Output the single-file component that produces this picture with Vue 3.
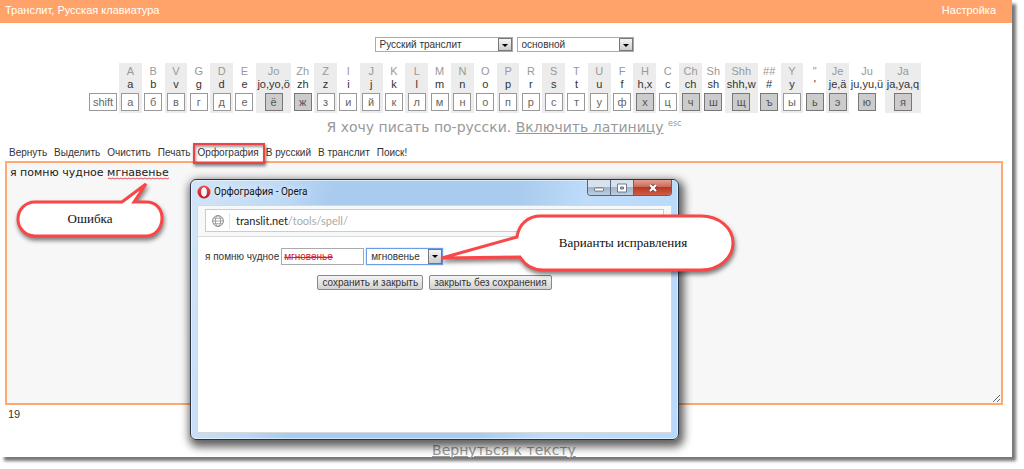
<script setup>
import { ref } from 'vue'

const letters = [
  ['A', 'a', 'а'], ['B', 'b', 'б'], ['V', 'v', 'в'], ['G', 'g', 'г'], ['D', 'd', 'д'], ['E', 'e', 'е'],
  ['Jo', 'jo,yo,ö', 'ё', 1], ['Zh', 'zh', 'ж', 1], ['Z', 'z', 'з'], ['I', 'i', 'и'], ['J', 'j', 'й'],
  ['K', 'k', 'к'], ['L', 'l', 'л'], ['M', 'm', 'м'], ['N', 'n', 'н'], ['O', 'o', 'о'], ['P', 'p', 'п'],
  ['R', 'r', 'р'], ['S', 's', 'с'], ['T', 't', 'т'], ['U', 'u', 'у'], ['F', 'f', 'ф'], ['H', 'h,x', 'х', 1],
  ['C', 'c', 'ц'], ['Ch', 'ch', 'ч', 1], ['Sh', 'sh', 'ш', 1], ['Shh', 'shh,w', 'щ', 1], ['##', '#', 'ъ', 1],
  ['Y', 'y', 'ы'], ['"', "'", 'ь', 1], ['Je', 'je,ä', 'э', 1], ['Ju', 'ju,yu,ü', 'ю', 1], ['Ja', 'ja,ya,q', 'я', 1],
].map(([upper, lower, key, dark], i) => ({ upper, lower, key, dark: !!dark, shaded: i % 2 === 0 }))

const actions = ['Вернуть', 'Выделить', 'Очистить', 'Печать', 'Орфография', 'В русский', 'В транслит', 'Поиск!']
const text = ref('я помню чудное мгнавенье')
const word = ref('мгновенье')
</script>

<template>
  <div class="frame">
  <div class="page">
    <header class="top">
      <a href="#">Транслит, Русская клавиатура</a>
      <a href="#">Настройка</a>
    </header>

    <main class="main">
      <div class="modes">
        <span class="pick pick-wide">
          <select aria-label="Язык"><option>Русский транслит</option></select>
          <i class="arrow"></i>
        </span>
        <span class="pick">
          <select aria-label="Раскладка"><option>основной</option></select>
          <i class="arrow"></i>
        </span>
      </div>

      <div class="keys">
        <div class="col shift"><button class="key wide" type="button">shift</button></div>
        <div v-for="l in letters" :key="l.key" class="col" :class="{ shaded: l.shaded }">
          <span class="upper">{{ l.upper }}</span>
          <span class="lower">{{ l.lower }}</span>
          <button class="key" :class="{ dark: l.dark }" type="button">{{ l.key }}</button>
        </div>
      </div>

      <p class="hint">Я хочу писать по-русски. <a href="#">Включить латиницу</a> <sup>esc</sup></p>

      <nav class="actions">
        <a v-for="a in actions" :key="a" href="#" :class="{ marked: a === 'Орфография' }">{{ a }}</a>
      </nav>

      <div class="editor">
        <textarea v-model="text" aria-label="Текст" spellcheck="false"></textarea>
        <svg class="squiggle" width="62" height="3" aria-hidden="true">
          <path d="M0 2l1-1 2 1 2-1 2 1 2-1 2 1 2-1 2 1 2-1 2 1 2-1 2 1 2-1 2 1 2-1 2 1 2-1 2 1 2-1 2 1 2-1 2 1 2-1 2 1 2-1 2 1 2-1 2 1 2-1 2 1 2-1" fill="none" stroke="#e8505a" />
        </svg>
      </div>
      <div class="count">19</div>
      <p class="back"><a href="#">Вернуться к тексту</a></p>
    </main>

    <section class="window" aria-label="Орфография">
      <div class="titlebar">
        <svg width="14" height="14" viewBox="0 0 14 14" aria-hidden="true">
          <defs>
            <linearGradient id="opera" x1="0" y1="0" x2="0" y2="1">
              <stop offset="0" stop-color="#f0504f" /><stop offset="1" stop-color="#c8101c" />
            </linearGradient>
          </defs>
          <path fill="url(#opera)" fill-rule="evenodd" d="M7 .5a6.500 6.500 0 0 1 0 13a6.500 6.500 0 0 1 0-13M7 2.500c-1.700 0-2.700 2-2.700 4.500s1 4.500 2.700 4.500 2.700-2 2.700-4.500-1-4.500-2.700-4.500" />
          <ellipse cx="7" cy="7" rx="2.700" ry="4.500" fill="#f4f8fc" />
        </svg>
        <span class="caption">Орфография - Opera</span>
        <div class="controls">
          <button type="button" aria-label="Свернуть">
            <svg width="12" height="12" viewBox="0 0 12 12"><rect x="1.500" y="6" width="9" height="3" rx=".5" fill="#fff" stroke="#55606e" stroke-width=".8" /></svg>
          </button>
          <button type="button" aria-label="Развернуть">
            <svg width="12" height="12" viewBox="0 0 12 12"><path fill="#fff" fill-rule="evenodd" stroke="#55606e" stroke-width=".8" d="M1.500 2h9v8h-9zM4.500 5h3v2h-3z" /></svg>
          </button>
          <button type="button" class="close" aria-label="Закрыть">
            <svg width="12" height="12" viewBox="0 0 12 12"><path d="M3 3l6 6M9 3l-6 6" stroke="#6b3a40" stroke-width="3.600" /><path d="M3 3l6 6M9 3l-6 6" stroke="#fff" stroke-width="2.200" /></svg>
          </button>
        </div>
      </div>
      <div class="client">
        <div class="addressbar">
          <div class="address">
            <svg width="12" height="12" viewBox="0 0 12 12" fill="none" stroke="#8b8b8b" aria-hidden="true">
              <circle cx="6" cy="6" r="5.400" /><ellipse cx="6" cy="6" rx="2.600" ry="5.400" stroke-width=".8" /><path d="M.6 6h10.800M1.500 3.300h9M1.500 8.700h9" stroke-width=".7" />
            </svg>
            <span class="url">translit.net<span>/tools/spell/</span></span>
          </div>
        </div>
        <form class="spell" @submit.prevent>
          <div class="line">
            <label for="word">я помню чудное</label>
            <input id="word" v-model="word" type="text" />
            <span class="pick focused">
              <select aria-label="Варианты исправления"><option>мгновенье</option></select>
              <i class="arrow"></i>
            </span>
          </div>
          <div class="buttons">
            <button type="button">сохранить и закрыть</button>
            <button type="button">закрыть без сохранения</button>
          </div>
        </form>
      </div>
    </section>

    <div class="callout mistake">
      <svg width="156" height="66" viewBox="0 0 156 66" aria-hidden="true">
        <path d="M23 22H110L134 4L122 22H134C144 22 150 29 150 38S144 56 134 56H23C13 56 6 48 6 39S13 22 23 22Z" />
      </svg>
      <span>Ошибка</span>
    </div>
    <div class="callout variants">
      <svg width="304" height="70" viewBox="0 0 304 70" aria-hidden="true">
        <path d="M105 6H265C283 6 297 18 297 33S283 60 265 60H107C96 60 89 55 84 47L6 48L81 27C83 14 92 6 105 6Z" />
      </svg>
      <span>Варианты исправления</span>
    </div>
  </div>
  </div>
</template>

<style>
body { background: #fff; }
</style>

<style scoped>
.frame { padding: 0 12px 12px 0; overflow: hidden; }
.page, .page * { box-sizing: border-box; }
.page {
  position: relative;
  background: #fff;
  color: #333;
  font: 10px/14px "Liberation Sans", Arial, sans-serif;
  box-shadow: 4px 4px 3px #777;
}
button, select, input, textarea { font: inherit; color: inherit; margin: 0; }
p { margin: 0; }

.top {
  display: flex;
  justify-content: space-between;
  align-items: center;
  height: 23px;
  padding: 0 16px 3px 5px;
  background: #ffa36a;
  font-size: 11px;
}
.top a { color: #fff; text-decoration: none; }

.main { padding: 14px 9px 0 5px; }
.modes { display: flex; justify-content: center; gap: 4px; }
.pick {
  position: relative;
  display: inline-flex;
  width: 117px;
  height: 15px;
  border: 1px solid #aaa;
  background: #fff;
}
.pick-wide { width: 138px; }
.pick select {
  appearance: none;
  width: 100%;
  padding: 0 16px 0 4px;
  border: 0;
  background: transparent;
  line-height: 13px;
  outline: none;
}
.arrow {
  position: absolute;
  top: 0;
  right: 0;
  bottom: 0;
  width: 14px;
  border: 1px solid #777;
  background: linear-gradient(#f4f4f4, #ccc);
  pointer-events: none;
}
.arrow::after {
  content: "";
  position: absolute;
  left: 3px;
  top: 5px;
  border: 3px solid transparent;
  border-top-color: #000;
  border-bottom: 0;
}

.keys {
  display: grid;
  grid-template-columns:
    minmax(0, 320fr) repeat(6, minmax(0, 228fr)) minmax(0, 355fr) repeat(19, minmax(0, 228fr))
    minmax(0, 330fr) repeat(4, minmax(0, 228fr)) repeat(2, minmax(0, 360fr));
  max-width: 834px;
  margin: 11px auto 0;
  font-size: 11px;
}
.col {
  display: flex;
  flex-direction: column;
  align-items: center;
  padding: 2px 0;
  line-height: 13px;
  white-space: nowrap;
}
.shaded { background: #ececec; }
.shift { justify-content: flex-end; }
.upper { color: #999; }
.key {
  width: 18px;
  height: 18px;
  margin-top: 2px;
  padding: 0;
  border: 1px solid #999;
  background: #fff;
  color: #666;
  line-height: 14px;
}
.key.wide { width: 28px; }
.key.dark { background: #ccc; border-color: #777; color: #555; }

.hint {
  margin-top: 5px;
  text-align: center;
  color: #999;
  font: 14px/18px "DejaVu Sans", Verdana, sans-serif;
}
.hint a, .back a { color: inherit; }
.hint sup { font-size: 8px; line-height: 8px; }

.actions { display: flex; gap: 7px; margin-top: 7px; padding: 2px 0 0 4px; height: 18px; align-items: center; }
.actions a { color: #333; text-decoration: none; }
.actions .marked { position: relative; z-index: 1; }
.marked::after {
  content: "";
  position: absolute;
  inset: -3px -6px -4px -5px;
  border: 2px solid #f04146;
  box-shadow: 1px 2px 3px rgba(0, 0, 0, .5), inset 1px 2px 3px rgba(0, 0, 0, .4);
}

.editor { position: relative; }
.editor textarea {
  display: block;
  width: 100%;
  height: 244px;
  padding: 2px 3px;
  border: 2px solid #ffa871;
  background: #f7f7f7;
  color: #222;
  font: 11px/16px "DejaVu Sans", Verdana, sans-serif;
  outline: none;
}
.squiggle { position: absolute; left: 103px; top: 16px; }
.count { padding: 2px 3px 0; font-size: 11px; }
.back {
  height: 36px;
  padding-top: 20px;
  text-align: center;
  color: #999;
  font: 14px/18px "DejaVu Sans", Verdana, sans-serif;
}

.window {
  position: absolute;
  left: 190px;
  top: 179px;
  width: 489px;
  height: 261px;
  display: flex;
  flex-direction: column;
  padding: 0 6px 6px;
  border: 1px solid #2b3442;
  border-radius: 6px;
  background: linear-gradient(100deg, #d3e5f8 0, #bdd9f5 18%, #a9cbed 27%, #a9cbed 62%, #bfdcfa 75%, #b8d9fb 100%);
  box-shadow: inset 0 0 0 1px rgba(255, 255, 255, .5), 2px 4px 9px 3px rgba(0, 0, 0, .62);
}
.titlebar { display: flex; height: 25px; color: #111; }
.titlebar > svg { margin-top: 5px; }
.caption {
  margin: 4px auto 0 3px;
  font: 10px/16px Roboto, sans-serif;
  text-shadow: 0 0 6px #fff;
}
.controls { display: flex; height: 16px; border: 1px solid #56657a; border-top: 0; border-radius: 0 0 4px 4px; overflow: hidden; }
.controls button {
  display: flex;
  align-items: center;
  justify-content: center;
  width: 23px;
  padding: 0;
  border: 0;
  border-right: 1px solid #56657a;
  background: linear-gradient(#d6e2ee 45%, #a2b5ca 50%, #bccee0);
}
.controls .close { width: 37px; border: 0; background: linear-gradient(#e2a092, #d06a58 45%, #b63a26 50%, #cf5c42); }
.client { flex: 1; border: 1px solid #d5d9dc; background: #fff; }
.addressbar { padding: 3px 7px 4px; border-bottom: 1px solid #d8dcdc; background: #f7f9f9; }
.address { display: flex; align-items: center; height: 23px; padding-left: 6px; border: 1px solid #ccc; background: #fff; }
.url {
  margin-left: 5px;
  padding-left: 6px;
  border-left: 1px solid #e4e4e4;
  color: #222;
  font: 11px/16px Lato, sans-serif;
}
.url span { color: #aaa; }
.spell { padding: 11px 7px; }
.line { display: flex; align-items: center; gap: 2px; }
.line input {
  width: 83px;
  height: 17px;
  padding: 0 2px;
  border: 1px solid #aaa;
  color: #d22030;
  text-decoration: line-through;
}
.pick.focused { width: 77px; height: 17px; border: 1px solid #6b9ce8; box-shadow: 0 0 1px #6b9ce8; }
.buttons { display: flex; justify-content: center; gap: 6px; margin-top: 10px; }
.buttons button {
  height: 15px;
  padding: 0 4px;
  border: 1px solid #888;
  border-radius: 2px;
  background: linear-gradient(#f5f5f5, #d2d2d2);
  line-height: 13px;
  white-space: nowrap;
}

.callout { position: absolute; display: grid; color: #111; font: 13px/16px "Liberation Serif", "Times New Roman", serif; }
.callout svg, .callout span { grid-area: 1 / 1; }
.callout span { position: relative; text-align: center; }
.callout path { fill: #fff; stroke: #f94647; stroke-width: 3; filter: drop-shadow(1px 3px 2px rgba(0, 0, 0, .5)); }
.mistake { left: 12px; top: 180px; }
.mistake span { padding-top: 31px; }
.variants { left: 436px; top: 210px; }
.variants span { padding: 25px 0 0 70px; }
</style>
